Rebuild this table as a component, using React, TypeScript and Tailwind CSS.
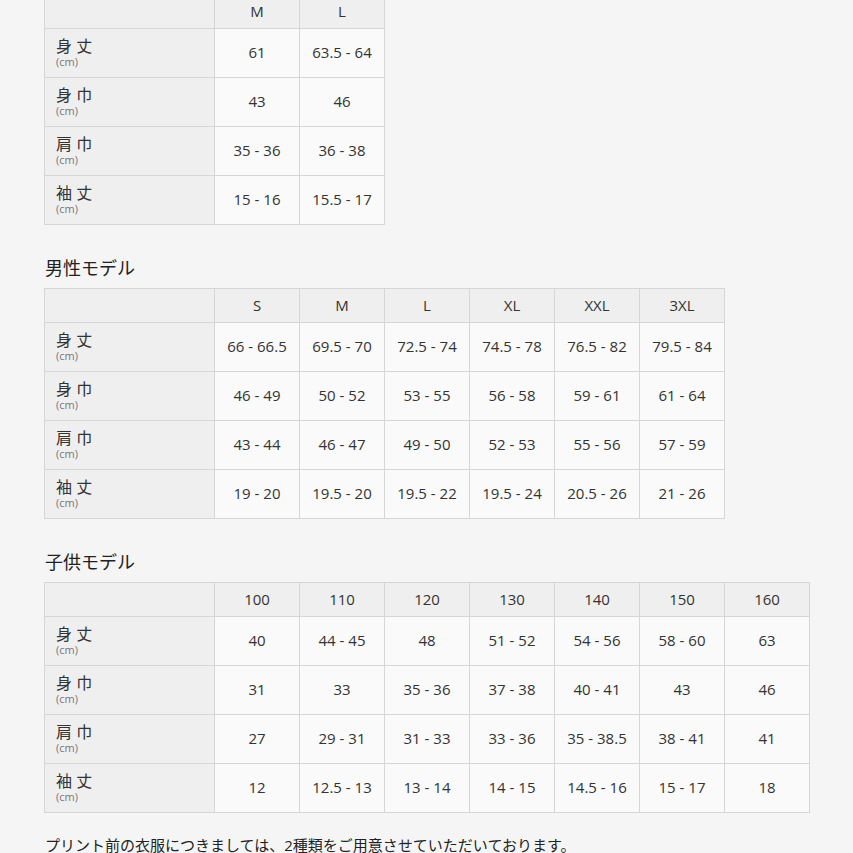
import React from "react";

const labels = ["身 丈", "身 巾", "肩 巾", "袖 丈"];

type T = { sizes: string[]; rows: string[][] };

const t1: T = {
  sizes: ["M", "L"],
  rows: [
    ["61", "63.5 - 64"],
    ["43", "46"],
    ["35 - 36", "36 - 38"],
    ["15 - 16", "15.5 - 17"],
  ],
};
const t2: T = {
  sizes: ["S", "M", "L", "XL", "XXL", "3XL"],
  rows: [
    ["66 - 66.5", "69.5 - 70", "72.5 - 74", "74.5 - 78", "76.5 - 82", "79.5 - 84"],
    ["46 - 49", "50 - 52", "53 - 55", "56 - 58", "59 - 61", "61 - 64"],
    ["43 - 44", "46 - 47", "49 - 50", "52 - 53", "55 - 56", "57 - 59"],
    ["19 - 20", "19.5 - 20", "19.5 - 22", "19.5 - 24", "20.5 - 26", "21 - 26"],
  ],
};
const t3: T = {
  sizes: ["100", "110", "120", "130", "140", "150", "160"],
  rows: [
    ["40", "44 - 45", "48", "51 - 52", "54 - 56", "58 - 60", "63"],
    ["31", "33", "35 - 36", "37 - 38", "40 - 41", "43", "46"],
    ["27", "29 - 31", "31 - 33", "33 - 36", "35 - 38.5", "38 - 41", "41"],
    ["12", "12.5 - 13", "13 - 14", "14 - 15", "14.5 - 16", "15 - 17", "18"],
  ],
};

function SizeTable({ t }: { t: T }) {
  return (
    <table className="table-fixed border-collapse border border-[#d6d6d6]" style={{ width: 170 + t.sizes.length * 85 }}>
      <colgroup>
        <col className="w-[170px]" />
        {t.sizes.map((s) => (
          <col key={s} className="w-[85px]" />
        ))}
      </colgroup>
      <thead>
        <tr className="h-[34px]">
          <th className="border border-[#d6d6d6] bg-[#efefef]" />
          {t.sizes.map((s) => (
            <th key={s} className="border border-[#d6d6d6] bg-[#efefef] text-center text-[15px] font-normal text-[#333]">
              {s}
            </th>
          ))}
        </tr>
      </thead>
      <tbody>
        {t.rows.map((r, i) => (
          <tr key={i} className="h-[49px]">
            <td className="border border-[#d6d6d6] bg-[#efefef] pl-[11px] align-middle">
              <div className="leading-[18px] text-[16px] text-[#333]">{labels[i]}</div>
              <div className="leading-[14px] text-[11px] text-[#777]">(cm)</div>
            </td>
            {r.map((v, j) => (
              <td key={j} className="border border-[#d6d6d6] bg-[#fafafa] pb-[1px] text-center text-[15px] text-[#333]">
                {v}
              </td>
            ))}
          </tr>
        ))}
      </tbody>
    </table>
  );
}

export default function App() {
  return (
    <div
      className="min-h-[853px] w-[853px] overflow-hidden bg-[#f5f5f5] pl-[44px]"
      style={{ fontFamily: '"Open Sans", "Noto Sans CJK JP", sans-serif' }}
    >
      <div className="-mt-[6px]">
        <SizeTable t={t1} />
      </div>
      <h2 className="mt-[31px] mb-[8px] pl-[1px] text-[18px] leading-[24px] font-normal text-[#222]">男性モデル</h2>
      <SizeTable t={t2} />
      <h2 className="mt-[31px] mb-[8px] pl-[1px] text-[18px] leading-[24px] font-normal text-[#222]">子供モデル</h2>
      <SizeTable t={t3} />
      <p className="mt-[21px] pl-[1px] text-[15px] leading-[22px] text-[#222]">
        プリント前の衣服につきましては、2種類をご用意させていただいております。
      </p>
    </div>
  );
}
